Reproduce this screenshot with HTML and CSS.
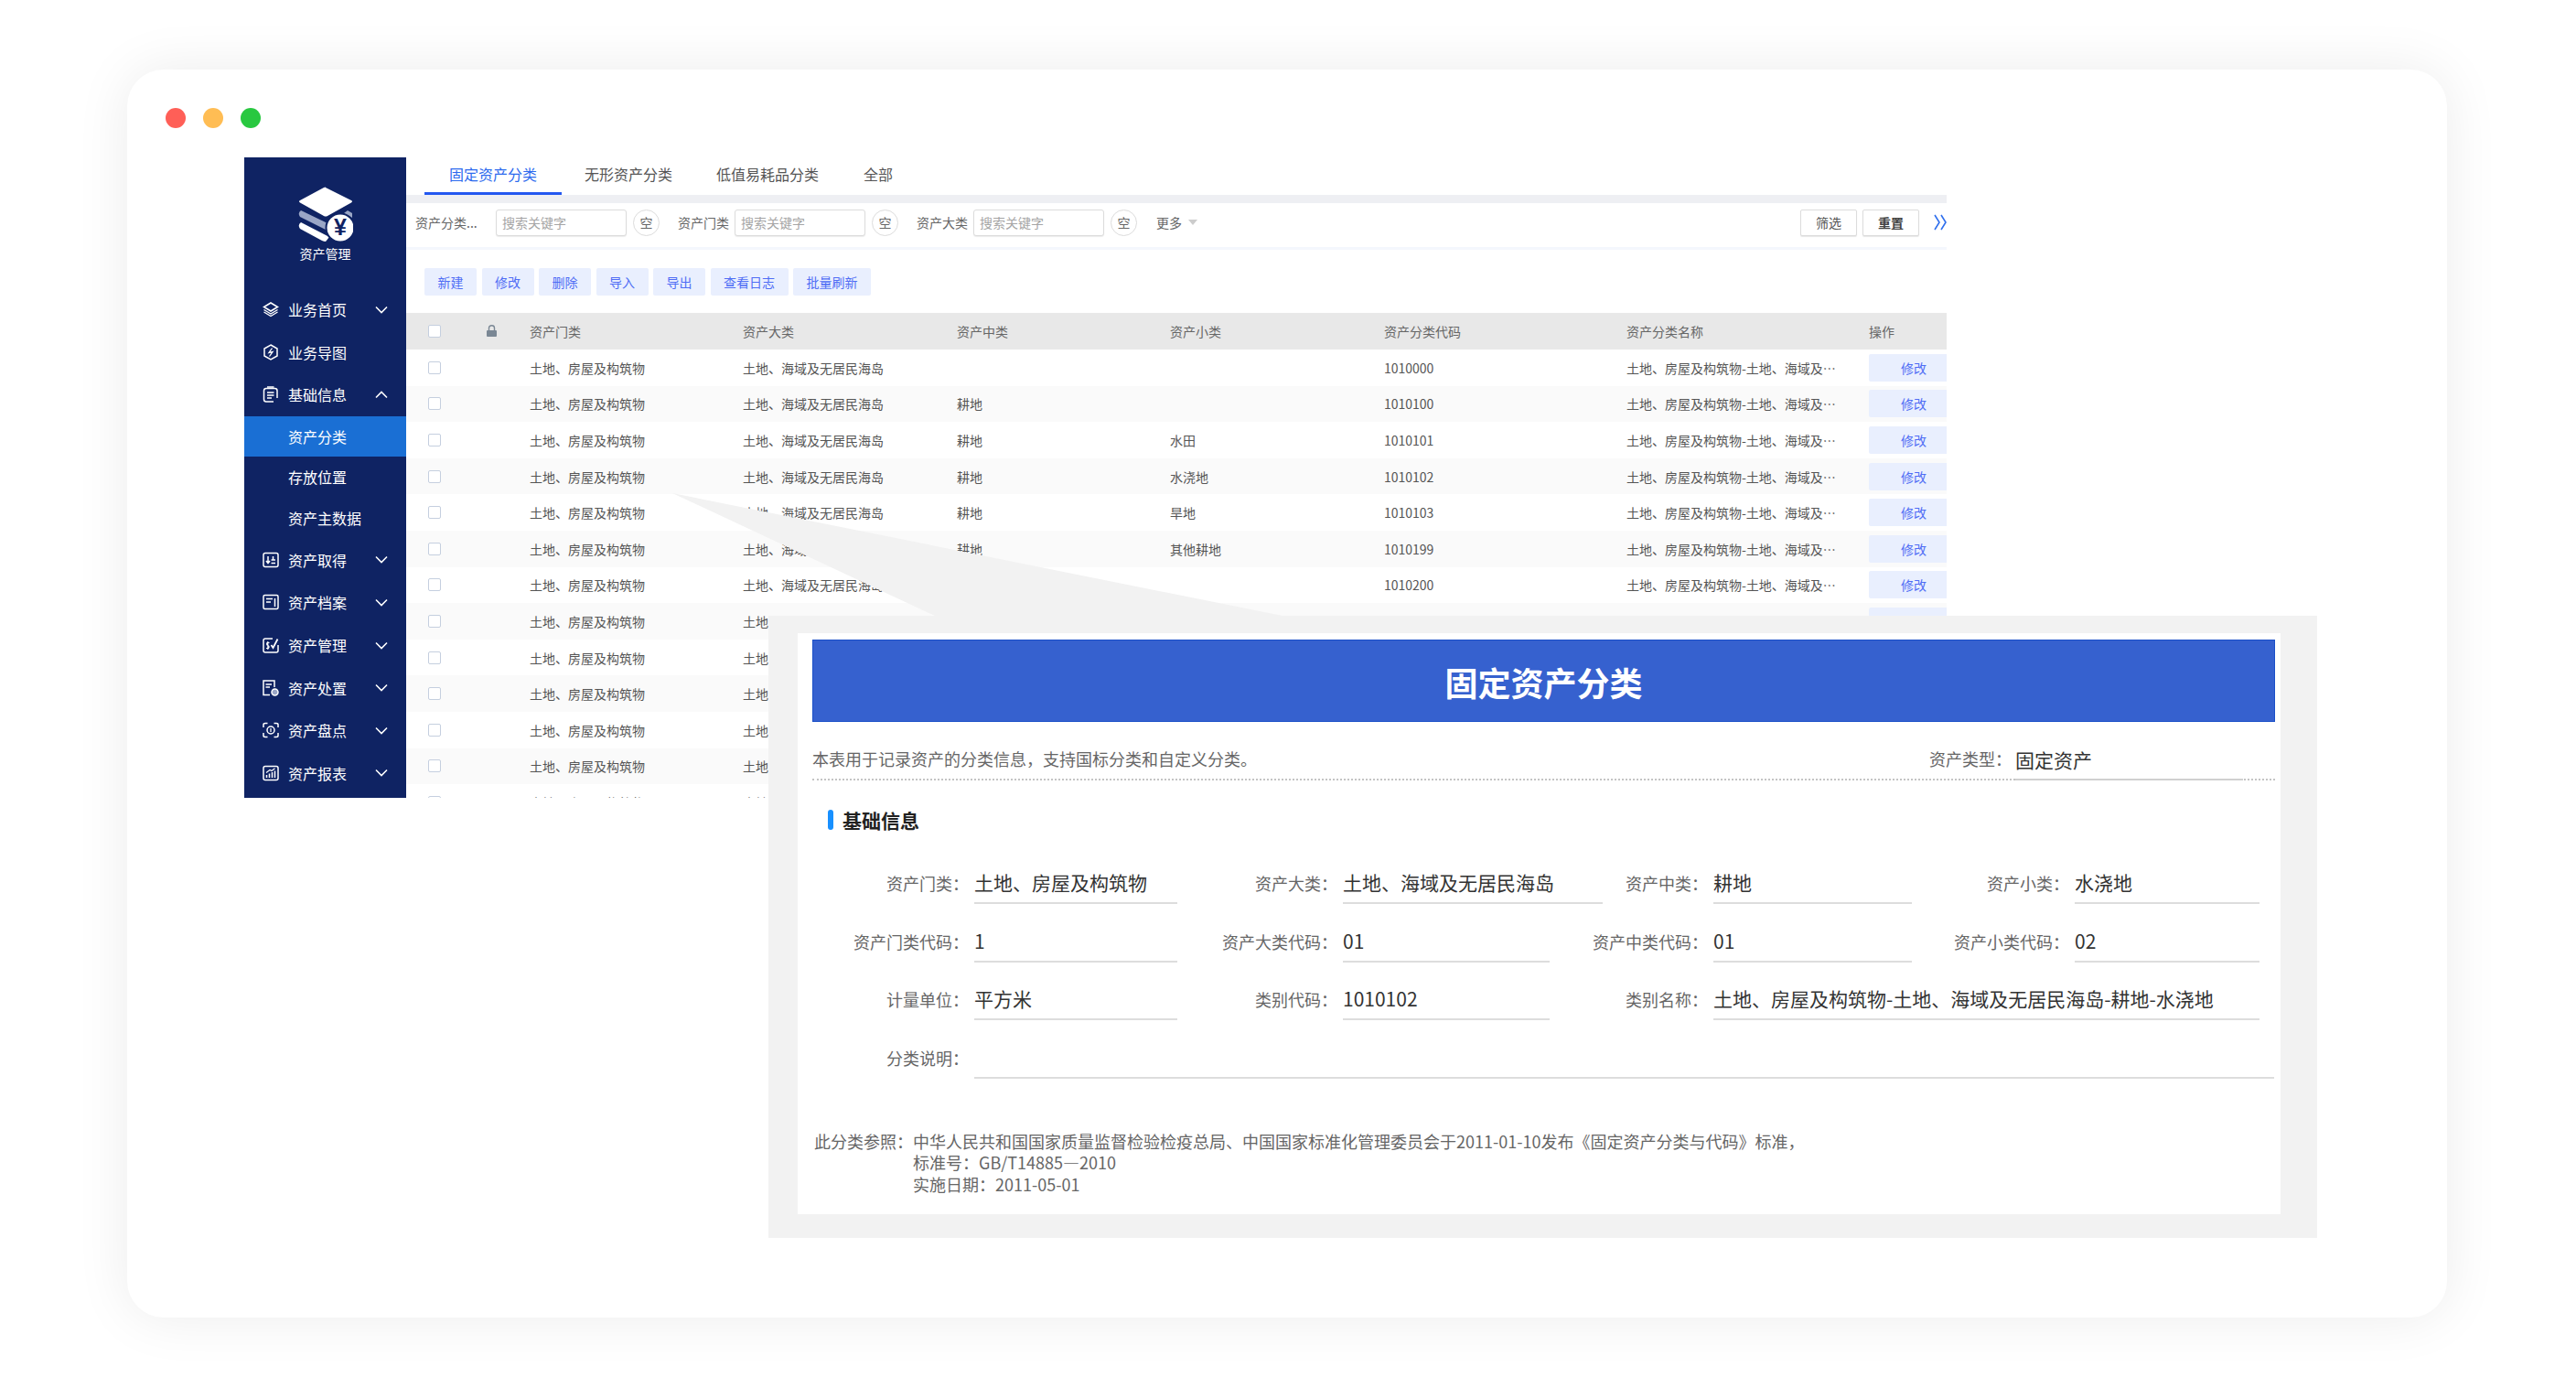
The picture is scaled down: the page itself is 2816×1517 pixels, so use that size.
FILE: index.html
```html
<!DOCTYPE html>
<html lang="zh-CN">
<head>
    <meta charset="UTF-8">
    <title>资产管理 - 固定资产分类</title>
    <link rel="stylesheet" href="styles.css">
</head>
<body>

<div class="window">
    <div class="dots">
        <span class="dot dot-red"></span>
        <span class="dot dot-orange"></span>
        <span class="dot dot-green"></span>
    </div>

    <div class="app">
        <div class="sidebar">
            <div class="logo">
                <svg class="logo-icon" width="60" height="62" viewBox="0 0 60 62">
                    <path d="M30 2 L58 16 Q60 17 58 18.500 L32 33 Q30 34 28 33 L2 18.500 Q0 17 2 16 L28 2 Q30 1 30 2 Z" fill="#fff"/>
                    <path d="M3 27 L32 41 L30 48 L2 34 Q-1 30 3 27 Z" fill="#9aa6c6"/>
                    <path d="M54 27 L59 30 L59 35 L50 30 Z" fill="#9aa6c6"/>
                    <path d="M3 40 L34 56 L30 61 Q28 61 26 60 L2 47 Q-1 43 3 40 Z" fill="#fff"/>
                    <circle cx="46" cy="46" r="15.500" fill="#fff" stroke="#0f2363" stroke-width="2"/>
                    <text x="46" y="54" text-anchor="middle" class="logo-yen">¥</text>
                </svg>
                <div class="logo-text">资产管理</div>
            </div>

            <div class="nav-item">
                <svg class="nav-icon" width="18" height="18" viewBox="0 0 18 18" fill="none" stroke="#fff" stroke-width="1.600"><path d="M9 2 L16.500 6.500 L9 11 L1.500 6.500 Z"/><path d="M1.500 9.500 L9 14 L16.500 9.500" stroke-width="1.300"/><path d="M1.500 12 L9 16.500 L16.500 12" stroke-width="1.300"/></svg>
                <span class="nav-label">业务首页</span>
                <svg class="chevron" width="14" height="9" viewBox="0 0 14 9"><polyline points="1,1.500 7,7.500 13,1.500"/></svg>
            </div>
            <div class="nav-item">
                <svg class="nav-icon" width="18" height="18" viewBox="0 0 18 18" fill="none" stroke="#fff" stroke-width="1.500"><path d="M9 1 L16 5 L16 13 L9 17 L2 13 L2 5 Z"/><path d="M10.500 4.500 L7 9.500 L11 8.500 L7.500 13.500" stroke-width="1.300"/></svg>
                <span class="nav-label">业务导图</span>
            </div>
            <div class="nav-item">
                <svg class="nav-icon" width="18" height="18" viewBox="0 0 18 18" fill="none" stroke="#fff" stroke-width="1.500"><path d="M12 17 L4 17 Q1.500 17 1.500 14.500 L1.500 5 Q1.500 2.500 4 2.500 L13.500 2.500 Q16 2.500 16 5 L16 13"/><path d="M5 1 L12.500 1 M5 7 L12.500 7 M5 10 L12.500 10 M5 13 L10 13"/></svg>
                <span class="nav-label">基础信息</span>
                <svg class="chevron" width="14" height="9" viewBox="0 0 14 9"><polyline points="1,7.500 7,1.500 13,7.500"/></svg>
            </div>
            <div class="nav-sub nav-sub-active">资产分类</div>
            <div class="nav-sub">存放位置</div>
            <div class="nav-sub">资产主数据</div>
            <div class="nav-item">
                <svg class="nav-icon" width="18" height="18" viewBox="0 0 18 18" fill="none" stroke="#fff" stroke-width="1.500"><rect x="1" y="1.500" width="16" height="15" rx="2"/><path d="M6 5 L6 12 M4 10 L6 12.500 L8 10 M11.500 5 L11.500 9 M9.500 9 L14 9 M9.500 12.500 L14 12.500"/></svg>
                <span class="nav-label">资产取得</span>
                <svg class="chevron" width="14" height="9" viewBox="0 0 14 9"><polyline points="1,1.500 7,7.500 13,1.500"/></svg>
            </div>
            <div class="nav-item">
                <svg class="nav-icon" width="18" height="18" viewBox="0 0 18 18" fill="none" stroke="#fff" stroke-width="1.500"><rect x="1" y="1.500" width="16" height="15" rx="1.500"/><path d="M4 5.500 L11 5.500 M4 9 L9 9 M13.500 5 L13.500 14"/></svg>
                <span class="nav-label">资产档案</span>
                <svg class="chevron" width="14" height="9" viewBox="0 0 14 9"><polyline points="1,1.500 7,7.500 13,1.500"/></svg>
            </div>
            <div class="nav-item">
                <svg class="nav-icon" width="18" height="18" viewBox="0 0 18 18" fill="none" stroke="#fff" stroke-width="1.500"><path d="M11 2 L3 2 Q1 2 1 4 L1 15 Q1 17 3 17 L15 17 Q17 17 17 15 L17 9"/><path d="M9.500 9 L11.500 12 L16.500 2.500" stroke-width="1.800"/><path d="M7.500 6.500 L5 6.500 Q3.800 8.500 6 9.500 Q8 10.500 6.500 12.500 L4 12.500 M5.800 5 L5.800 14" stroke-width="1.100"/></svg>
                <span class="nav-label">资产管理</span>
                <svg class="chevron" width="14" height="9" viewBox="0 0 14 9"><polyline points="1,1.500 7,7.500 13,1.500"/></svg>
            </div>
            <div class="nav-item">
                <svg class="nav-icon" width="18" height="18" viewBox="0 0 18 18" fill="none" stroke="#fff" stroke-width="1.500"><path d="M8 16.500 L1 16.500 L1 1 L13 1 L13 8"/><path d="M3.500 5 L10 5 M3.500 8 L8 8"/><circle cx="13.500" cy="13.500" r="3.500" fill="#9aa6c6"/></svg>
                <span class="nav-label">资产处置</span>
                <svg class="chevron" width="14" height="9" viewBox="0 0 14 9"><polyline points="1,1.500 7,7.500 13,1.500"/></svg>
            </div>
            <div class="nav-item">
                <svg class="nav-icon" width="18" height="18" viewBox="0 0 18 18" fill="none" stroke="#fff" stroke-width="1.500"><path d="M1 6 L1 3 Q1 1.500 3 1.500 L5.500 1.500 M12.500 1.500 L15 1.500 Q17 1.500 17 3 L17 6 M17 12 L17 15 Q17 16.500 15 16.500 L12.500 16.500 M5.500 16.500 L3 16.500 Q1 16.500 1 15 L1 12"/><circle cx="9" cy="9" r="4"/><path d="M9 7 L9 11" stroke-width="1.200"/></svg>
                <span class="nav-label">资产盘点</span>
                <svg class="chevron" width="14" height="9" viewBox="0 0 14 9"><polyline points="1,1.500 7,7.500 13,1.500"/></svg>
            </div>
            <div class="nav-item">
                <svg class="nav-icon" width="18" height="18" viewBox="0 0 18 18" fill="none" stroke="#fff" stroke-width="1.500"><rect x="1" y="1.500" width="16" height="15" rx="2"/><path d="M4.500 14 L4.500 11 M7.500 14 L7.500 9.500 M10.500 14 L10.500 8 M13.500 14 L13.500 6.500"/><path d="M4 8.500 L8 5.500 L10 6.500 L13.500 3.800" stroke-width="1.100"/></svg>
                <span class="nav-label">资产报表</span>
                <svg class="chevron" width="14" height="9" viewBox="0 0 14 9"><polyline points="1,1.500 7,7.500 13,1.500"/></svg>
            </div>
        </div>

        <div class="main">
            <div class="tabs">
                <div class="tab tab-active">固定资产分类</div>
                <div class="tab tab-intangible">无形资产分类</div>
                <div class="tab tab-lowvalue">低值易耗品分类</div>
                <div class="tab tab-all">全部</div>
            </div>

            <div class="filters">
                <label class="filter-label filter-label-first">资产分类...</label>
                <input class="filter-input" type="text" placeholder="搜索关键字">
                <button class="filter-clear">空</button>
                <label class="filter-label">资产门类</label>
                <input class="filter-input" type="text" placeholder="搜索关键字">
                <button class="filter-clear">空</button>
                <label class="filter-label">资产大类</label>
                <input class="filter-input" type="text" placeholder="搜索关键字">
                <button class="filter-clear">空</button>
                <span class="filter-more">更多<span class="caret"></span></span>
                <button class="filter-btn filter-btn-first">筛选</button>
                <button class="filter-btn filter-btn-strong">重置</button>
                <svg class="collapse" width="14" height="18" viewBox="0 0 14 18" fill="none" stroke="#2f6fed" stroke-width="1.600"><polyline points="1,1 6,9 1,17"/><polyline points="8,1 13,9 8,17"/></svg>
            </div>

            <div class="actions">
                <button class="action-btn">新建</button>
                <button class="action-btn">修改</button>
                <button class="action-btn">删除</button>
                <button class="action-btn">导入</button>
                <button class="action-btn">导出</button>
                <button class="action-btn action-btn-wide">查看日志</button>
                <button class="action-btn action-btn-wide">批量刷新</button>
            </div>

            <div class="table-wrap">
                <table class="data-table">
                    <colgroup>
                        <col class="col-check">
                        <col class="col-lock">
                        <col class="col-text">
                        <col class="col-text2">
                        <col class="col-text">
                        <col class="col-text2">
                        <col class="col-code">
                        <col class="col-code">
                        <col class="col-op">
                    </colgroup>
                    <thead>
                        <tr>
                            <th class="cell-check"><input type="checkbox"></th>
                            <th class="cell-lock">
                                <svg width="11" height="13" viewBox="0 0 11 13" fill="#7a8794"><path d="M1 6 L10 6 Q11 6 11 7 L11 12 Q11 13 10 13 L1 13 Q0 13 0 12 L0 7 Q0 6 1 6 Z"/><path d="M2.500 6 L2.500 3.500 Q2.500 0.800 5.500 0.800 Q8.500 0.800 8.500 3.500 L8.500 6" fill="none" stroke="#7a8794" stroke-width="1.400"/></svg>
                            </th>
                            <th>资产门类</th>
                            <th>资产大类</th>
                            <th>资产中类</th>
                            <th>资产小类</th>
                            <th>资产分类代码</th>
                            <th>资产分类名称</th>
                            <th>操作</th>
                        </tr>
                    </thead>
                    <tbody>
                        <tr><td class="cell-check"><input type="checkbox"></td><td></td><td>土地、房屋及构筑物</td><td>土地、海域及无居民海岛</td><td></td><td></td><td>1010000</td><td class="cell-name">土地、房屋及构筑物-土地、海域及无居民海岛</td><td><a class="row-edit">修改</a></td></tr>
                        <tr><td class="cell-check"><input type="checkbox"></td><td></td><td>土地、房屋及构筑物</td><td>土地、海域及无居民海岛</td><td>耕地</td><td></td><td>1010100</td><td class="cell-name">土地、房屋及构筑物-土地、海域及无居民海岛-耕地</td><td><a class="row-edit">修改</a></td></tr>
                        <tr><td class="cell-check"><input type="checkbox"></td><td></td><td>土地、房屋及构筑物</td><td>土地、海域及无居民海岛</td><td>耕地</td><td>水田</td><td>1010101</td><td class="cell-name">土地、房屋及构筑物-土地、海域及无居民海岛-耕地-水田</td><td><a class="row-edit">修改</a></td></tr>
                        <tr><td class="cell-check"><input type="checkbox"></td><td></td><td>土地、房屋及构筑物</td><td>土地、海域及无居民海岛</td><td>耕地</td><td>水浇地</td><td>1010102</td><td class="cell-name">土地、房屋及构筑物-土地、海域及无居民海岛-耕地-水浇地</td><td><a class="row-edit">修改</a></td></tr>
                        <tr><td class="cell-check"><input type="checkbox"></td><td></td><td>土地、房屋及构筑物</td><td>土地、海域及无居民海岛</td><td>耕地</td><td>旱地</td><td>1010103</td><td class="cell-name">土地、房屋及构筑物-土地、海域及无居民海岛-耕地-旱地</td><td><a class="row-edit">修改</a></td></tr>
                        <tr><td class="cell-check"><input type="checkbox"></td><td></td><td>土地、房屋及构筑物</td><td>土地、海域及无居民海岛</td><td>耕地</td><td>其他耕地</td><td>1010199</td><td class="cell-name">土地、房屋及构筑物-土地、海域及无居民海岛-耕地-其他耕地</td><td><a class="row-edit">修改</a></td></tr>
                        <tr><td class="cell-check"><input type="checkbox"></td><td></td><td>土地、房屋及构筑物</td><td>土地、海域及无居民海岛</td><td>园地</td><td></td><td>1010200</td><td class="cell-name">土地、房屋及构筑物-土地、海域及无居民海岛-园地</td><td><a class="row-edit">修改</a></td></tr>
                        <tr><td class="cell-check"><input type="checkbox"></td><td></td><td>土地、房屋及构筑物</td><td>土地、海域及无居民海岛</td><td></td><td></td><td></td><td></td><td><a class="row-edit">修改</a></td></tr>
                        <tr><td class="cell-check"><input type="checkbox"></td><td></td><td>土地、房屋及构筑物</td><td>土地、海域及无居民海岛</td><td></td><td></td><td></td><td></td><td><a class="row-edit">修改</a></td></tr>
                        <tr><td class="cell-check"><input type="checkbox"></td><td></td><td>土地、房屋及构筑物</td><td>土地、海域及无居民海岛</td><td></td><td></td><td></td><td></td><td><a class="row-edit">修改</a></td></tr>
                        <tr><td class="cell-check"><input type="checkbox"></td><td></td><td>土地、房屋及构筑物</td><td>土地、海域及无居民海岛</td><td></td><td></td><td></td><td></td><td><a class="row-edit">修改</a></td></tr>
                        <tr><td class="cell-check"><input type="checkbox"></td><td></td><td>土地、房屋及构筑物</td><td>土地、海域及无居民海岛</td><td></td><td></td><td></td><td></td><td><a class="row-edit">修改</a></td></tr>
                        <tr><td class="cell-check"><input type="checkbox"></td><td></td><td>土地、房屋及构筑物</td><td>土地、海域及无居民海岛</td><td></td><td></td><td></td><td></td><td><a class="row-edit">修改</a></td></tr>
                    </tbody>
                </table>
            </div>
        </div>
    </div>

    <!-- callout: wedge from the table row to the enlarged form -->
    <div class="wedge"></div>
    <div class="callout">
        <div class="sheet">
            <div class="banner">固定资产分类</div>
            <div class="intro">
                <span class="intro-text">本表用于记录资产的分类信息，支持国标分类和自定义分类。</span>
                <span class="intro-label">资产类型：</span>
                <span class="intro-value">固定资产</span>
            </div>
            <div class="section-title"><span class="section-bar"></span>基础信息</div>

            <div class="form-grid">
                <div class="field-label">资产门类：</div>
                <div class="field-value">土地、房屋及构筑物</div>
                <div class="field-label">资产大类：</div>
                <div class="field-value field-value-long">土地、海域及无居民海岛</div>
                <div class="field-label">资产中类：</div>
                <div class="field-value">耕地</div>
                <div class="field-label">资产小类：</div>
                <div class="field-value">水浇地</div>

                <div class="field-label">资产门类代码：</div>
                <div class="field-value">1</div>
                <div class="field-label">资产大类代码：</div>
                <div class="field-value">01</div>
                <div class="field-label">资产中类代码：</div>
                <div class="field-value">01</div>
                <div class="field-label">资产小类代码：</div>
                <div class="field-value">02</div>

                <div class="field-label">计量单位：</div>
                <div class="field-value">平方米</div>
                <div class="field-label">类别代码：</div>
                <div class="field-value">1010102</div>
                <div class="field-label">类别名称：</div>
                <div class="field-value field-span-3">土地、房屋及构筑物-土地、海域及无居民海岛-耕地-水浇地</div>

                <div class="field-label">分类说明：</div>
                <div class="field-value field-span-all"></div>
            </div>

            <div class="notes">
                <div>此分类参照：</div>
                <div>
                    <div>中华人民共和国国家质量监督检验检疫总局、中国国家标准化管理委员会于2011-01-10发布《固定资产分类与代码》标准，</div>
                    <div>标准号：GB/T14885—2010</div>
                    <div>实施日期：2011-05-01</div>
                </div>
            </div>
        </div>
    </div>
</div>

</body>
</html>
```

FILE: styles.css
```css
* {
    box-sizing: border-box;
}

body {
    margin: 0;
    width: 2816px;
    height: 1517px;
    overflow: hidden;
    background: #fff;
    font-family: "Noto Sans CJK SC", "Liberation Sans", sans-serif;
    color: #555;
}

.window {
    position: relative;
    margin: 76px 0 0 139px;
    width: 2536px;
    height: 1364px;
    background: #fff;
    border-radius: 40px;
    box-shadow: 0 0 60px rgba(0, 0, 0, 0.08);
    padding-top: 42px;
}

.dots {
    display: flex;
    gap: 19px;
    padding-left: 42px;
    height: 22px;
}

.dot {
    width: 22px;
    height: 22px;
    border-radius: 50%;
}

.dot-red { background: #ff5f57; }
.dot-orange { background: #ffbd54; }
.dot-green { background: #28c840; }

.app {
    display: flex;
    margin: 32px 0 0 128px;
    width: 1861px;
    height: 700px;
}

/* sidebar */
.sidebar {
    width: 177px;
    flex-shrink: 0;
    background: #0f2363;
    color: #fff;
    font-size: 16px;
}

.logo {
    height: 143px;
    padding-top: 31px;
    text-align: center;
}

.logo-icon {
    display: block;
    margin: 0 auto;
}

.logo-yen {
    font-size: 25px;
    font-weight: 700;
    fill: #0f2363;
    font-family: "Liberation Sans", sans-serif;
}

.logo-text {
    font-size: 14px;
    line-height: 20px;
    margin-top: 2px;
}

.nav-item {
    display: flex;
    align-items: center;
    height: 46.6px;
    padding-left: 20px;
}

.nav-icon {
    flex-shrink: 0;
}

.nav-label {
    margin-left: 10px;
    width: 95px;
}

.chevron {
    fill: none;
    stroke: #fff;
    stroke-width: 1.6;
}

.nav-sub {
    height: 44.6px;
    line-height: 44.6px;
    padding-left: 48px;
}

.nav-sub-active {
    background: #1a6fd4;
}

/* main area */
.main {
    width: 1684px;
    background: #fff;
}

.tabs {
    display: flex;
    height: 41px;
    padding-left: 20px;
    font-size: 16px;
    color: #555;
}

.tab {
    line-height: 36px;
    white-space: nowrap;
}

.tab-active {
    width: 150px;
    text-align: center;
    color: #2d6bee;
    border-bottom: 3px solid #2458f0;
}

.tab-intangible { margin-left: 25px; }
.tab-lowvalue { margin-left: 48px; }
.tab-all { margin-left: 49px; }

.filters {
    display: flex;
    align-items: center;
    height: 60px;
    padding: 0 0 6px 10px;
    border-top: 9px solid #eeeff3;
    border-bottom: 3px solid #f4f7fd;
    font-size: 14px;
    color: #666;
}

.filter-label {
    width: 62px;
    margin-left: 20px;
    white-space: nowrap;
}

.filter-label-first {
    width: 88px;
    margin-left: 0;
}

.filter-input {
    width: 143px;
    height: 29px;
    padding: 0 6px;
    border: 1px solid #dcdcdc;
    border-radius: 3px;
    font: inherit;
    box-shadow: 0 1px 1px rgba(0, 0, 0, 0.08);
}

.filter-input::placeholder {
    color: #a5a5a5;
}

.filter-clear {
    width: 29px;
    height: 29px;
    margin-left: 7px;
    padding: 0;
    background: #fff;
    border: 1px solid #dcdcdc;
    border-radius: 50%;
    font: inherit;
    color: #666;
}

.filter-more {
    display: flex;
    align-items: center;
    margin-left: 21px;
    color: #666;
}

.caret {
    margin-left: 7px;
    border-left: 5px solid transparent;
    border-right: 5px solid transparent;
    border-top: 6px solid #ccc;
}

.filter-btn {
    width: 62px;
    height: 29px;
    margin-left: 6px;
    padding: 0;
    background: #fff;
    border: 1px solid #dcdcdc;
    border-radius: 2px;
    box-shadow: 0 1px 1px rgba(0, 0, 0, 0.1);
    font: inherit;
    color: #555;
}

.filter-btn-first {
    margin-left: auto;
}

.filter-btn-strong {
    color: #444;
    font-weight: 700;
}

.collapse {
    margin-left: 16px;
}

.actions {
    display: flex;
    gap: 5.5px;
    padding: 20px 0 19px 20px;
}

.action-btn {
    width: 57px;
    height: 30px;
    padding: 0;
    background: #e9effe;
    border: none;
    border-radius: 2px;
    font: inherit;
    font-size: 14px;
    color: #4f6df5;
}

.action-btn-wide {
    width: 85px;
}

/* table, cut off at the bottom of the app frame */
.table-wrap {
    height: 530px;
    overflow: hidden;
}

.data-table {
    width: 1684px;
    table-layout: fixed;
    border-collapse: collapse;
    font-size: 14px;
}

.col-check { width: 81px; }
.col-lock { width: 54px; }
.col-text { width: 233px; }
.col-text2 { width: 234px; }
.col-code { width: 265px; }
.col-op { width: 85px; }

.data-table th {
    height: 40px;
    padding: 0;
    background: #e8e8e8;
    font-weight: 400;
    text-align: left;
    color: #666;
}

.data-table td {
    height: 39.6px;
    padding: 0;
    white-space: nowrap;
}

.data-table tbody tr:nth-child(even) td {
    background: #fafafa;
}

.cell-check {
    padding-left: 24px !important;
}

.cell-lock {
    padding-left: 7px !important;
}

.data-table input[type="checkbox"] {
    display: block;
    appearance: none;
    width: 14px;
    height: 14px;
    margin: 0;
    background: #fff;
    border: 1.5px solid #c5cfdf;
    border-radius: 2px;
}

.data-table td.cell-name {
    padding-right: 25px;
    overflow: hidden;
    text-overflow: ellipsis;
}

.row-edit {
    display: block;
    height: 30px;
    line-height: 31px;
    padding-left: 35px;
    background: #e9effe;
    border-radius: 2px 0 0 2px;
    color: #4f6df5;
}

/* callout */
.wedge {
    position: absolute;
    left: 596px;
    top: 463px;
    width: 672px;
    height: 135px;
    background: #f2f2f2;
    clip-path: polygon(0 0, 289px 135px, 672px 135px);
}

.callout {
    position: absolute;
    left: 701px;
    top: 597px;
    width: 1693px;
    padding: 19px 40px 26px 32px;
    background: #f2f2f2;
}

.sheet {
    height: 635px;
    padding: 7px 6px 0 16px;
    background: #fff;
    font-size: 18px;
    color: #666;
}

.banner {
    height: 90px;
    line-height: 90px;
    text-align: center;
    background: #3661cf;
    border: 1px solid #1a4fc8;
    font-size: 36px;
    font-weight: 700;
    color: #fff;
}

.intro {
    display: flex;
    align-items: center;
    height: 64px;
    padding-top: 18px;
    border-bottom: 2px dotted #c4c4c4;
}

.intro-text {
    width: 1221px;
}

.intro-label {
    width: 94px;
}

.intro-value {
    width: 249px;
    height: 46px;
    line-height: 46px;
    font-size: 21px;
    color: #333;
    border-bottom: 2px solid #d0d0d0;
    margin-top: 1px;
}

.section-title {
    display: flex;
    align-items: center;
    gap: 10px;
    margin: 31px 0 0 17px;
    height: 24px;
    font-size: 21px;
    font-weight: 700;
    color: #222;
}

.section-bar {
    width: 6px;
    height: 22px;
    border-radius: 3px;
    background: #1890ff;
}

.form-grid {
    display: grid;
    grid-template-columns: 177px 222px 181px 226px 179px 217px 178px 202px;
    grid-auto-rows: 46px;
    row-gap: 17.5px;
    margin-top: 34px;
}

.field-label {
    padding-right: 6px;
    line-height: 46px;
    text-align: right;
    white-space: nowrap;
}

.field-value {
    height: 46px;
    line-height: 44px;
    font-size: 21px;
    color: #333;
    white-space: nowrap;
    border-bottom: 2px solid #ddd;
}

.field-value-long {
    margin-right: -58px;
}

.field-span-3 {
    grid-column: span 3;
}

.field-span-all {
    grid-column: span 7;
    margin-right: -16px;
}

.notes {
    display: grid;
    grid-template-columns: 108px 1fr;
    margin-top: 57px;
    padding-left: 2px;
    line-height: 23.5px;
}
```
